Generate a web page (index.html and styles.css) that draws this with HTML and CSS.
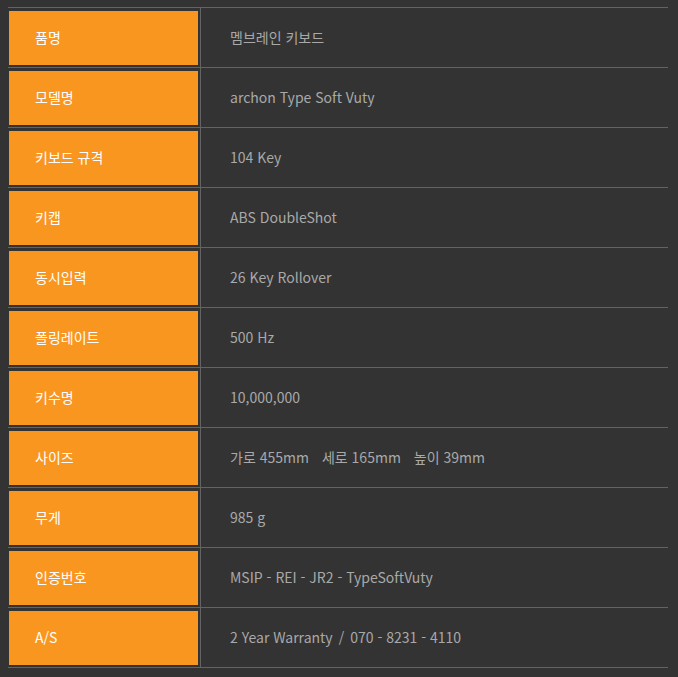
FILE: index.html
```html
<!DOCTYPE html>
<html lang="ko">
<head>
<meta charset="utf-8">
<link rel="stylesheet" href="styles.css">
</head>
<body>
<div class="spec">
  <div class="row"><div class="label"><span class="box">품명</span></div><div class="value">멤브레인 키보드</div></div>
  <div class="row"><div class="label"><span class="box">모델명</span></div><div class="value">archon Type Soft Vuty</div></div>
  <div class="row"><div class="label"><span class="box">키보드 규격</span></div><div class="value">104 Key</div></div>
  <div class="row"><div class="label"><span class="box">키캡</span></div><div class="value">ABS DoubleShot</div></div>
  <div class="row"><div class="label"><span class="box">동시입력</span></div><div class="value">26 Key Rollover</div></div>
  <div class="row"><div class="label"><span class="box">폴링레이트</span></div><div class="value">500 Hz</div></div>
  <div class="row"><div class="label"><span class="box">키수명</span></div><div class="value">10,000,000</div></div>
  <div class="row"><div class="label"><span class="box">사이즈</span></div><div class="value"><span class="part">가로 455mm</span><span class="part">세로 165mm</span><span class="part">높이 39mm</span></div></div>
  <div class="row"><div class="label"><span class="box">무게</span></div><div class="value">985 g</div></div>
  <div class="row"><div class="label"><span class="box">인증번호</span></div><div class="value">MSIP - REI - JR2 - TypeSoftVuty</div></div>
  <div class="row"><div class="label"><span class="box">A/S</span></div><div class="value">2 Year Warranty<span class="sep">/</span>070 - 8231 - 4110</div></div>
</div>
</body>
</html>
```
FILE: styles.css
```css
html, body {
  margin: 0;
  padding: 0;
  background: #333333;
}
body {
  padding: 7px 10px 0 8px;
  font-family: "Noto Sans CJK KR", "Noto Sans", sans-serif;
  font-size: 14px;
}
.spec {
  width: 660px;
  border-top: 1px solid #636363;
}
.row {
  display: flex;
  height: 59px;
  border-bottom: 1px solid #636363;
}
.label {
  width: 193px;
  flex: none;
  border-right: 1px solid #636363;
  padding: 3px 2px 2px 1px;
  box-sizing: border-box;
  display: flex;
}
.box {
  flex: 1;
  background: #f8961f;
  color: #ffffff;
  display: flex;
  align-items: center;
  padding-left: 26px;
  padding-bottom: 2px;
}
.value {
  flex: 1;
  display: flex;
  align-items: center;
  padding-left: 29px;
  padding-bottom: 2px;
  color: #a9a9a9;
  white-space: pre;
}
.part {
  margin-right: 13px;
}
.sep {
  margin: 0 6px;
}
```
